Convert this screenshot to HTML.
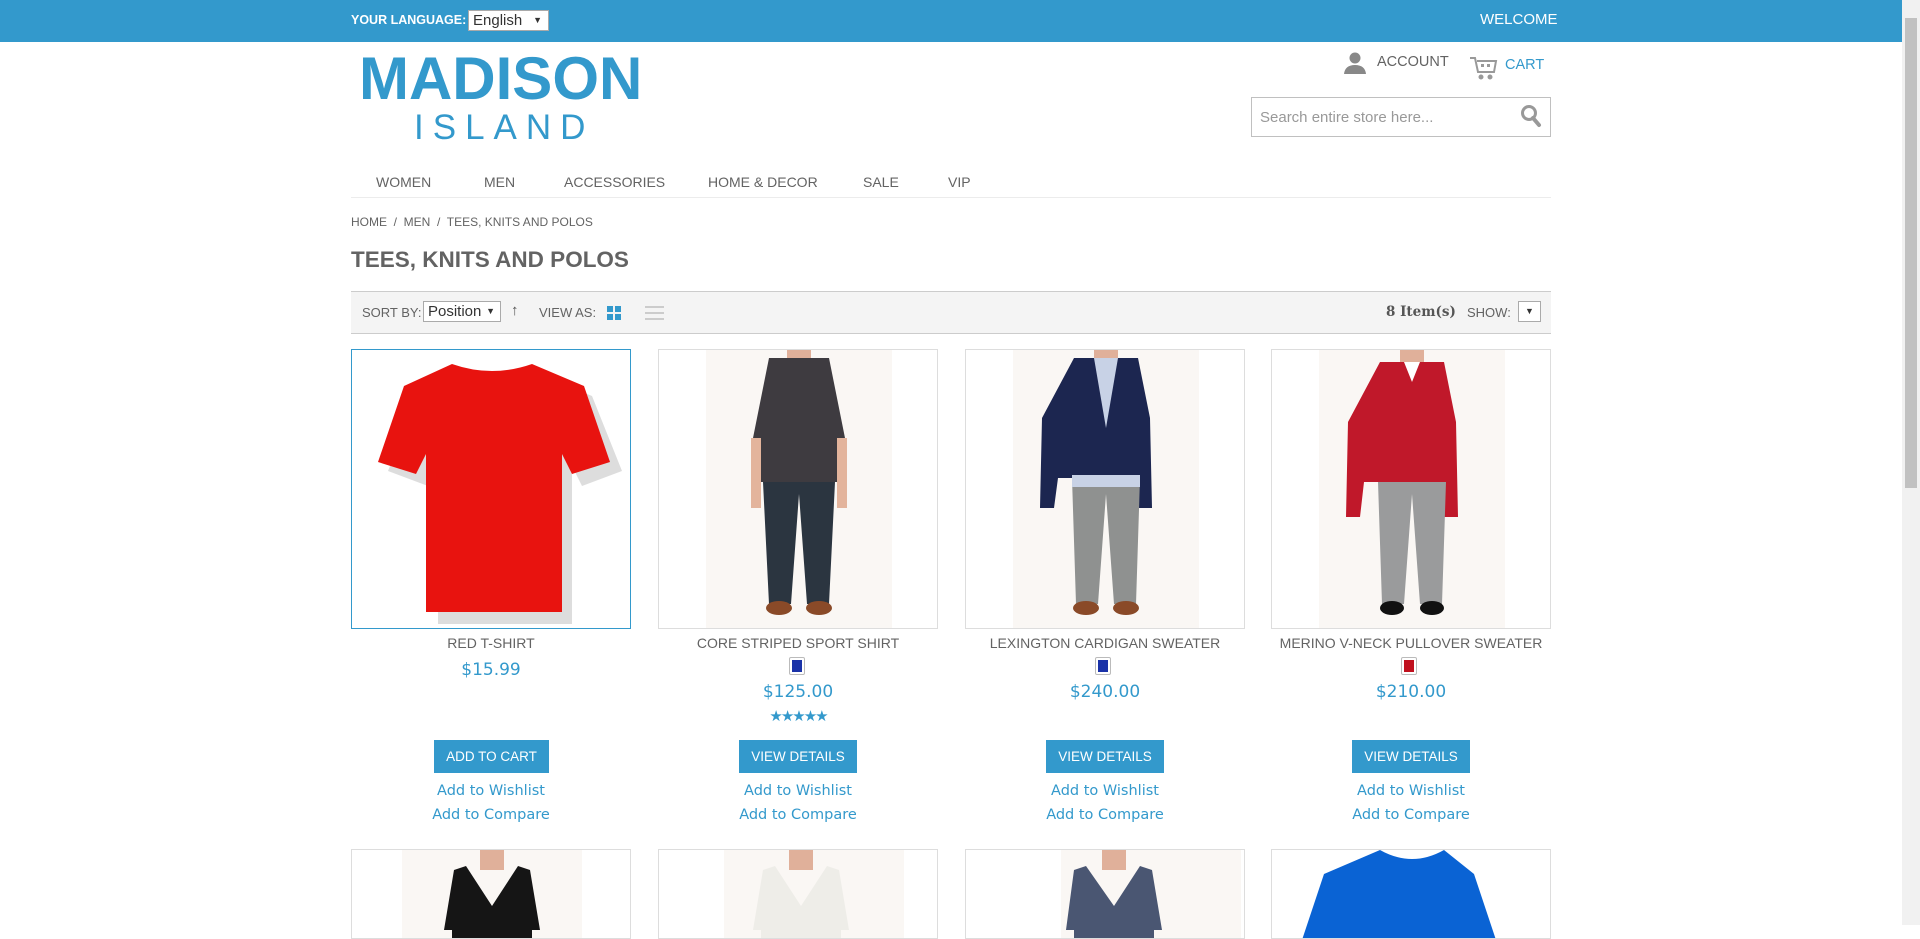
<!DOCTYPE html>
<html><head><meta charset="utf-8"><style>
*{box-sizing:border-box;margin:0;padding:0}
body{width:1920px;height:925px;overflow:hidden;background:#fff;font-family:"Liberation Sans",sans-serif;color:#636363;position:relative}
.a{position:absolute}
.top{left:0;top:0;width:1902px;height:42px;background:#3399cc}
.sb{left:1902px;top:0;width:18px;height:925px;background:#f1f1f1}
.sbt{left:1905px;top:18px;width:12px;height:470px;background:#c1c1c1}
.nav span{position:absolute;top:174px;font-size:14px;color:#636363}
.prod{position:absolute;top:349px;width:280px;height:280px;border:1px solid #ddd;overflow:hidden;background:#fff}
.row2{top:849px;height:90px}
.name{position:absolute;width:280px;text-align:center;font-size:14px;color:#636363;top:635px}
.price{position:absolute;width:280px;text-align:center;font-size:17px;color:#3399cc;font-family:"DejaVu Sans",sans-serif}
.sw{position:absolute;width:16px;height:18px;border:1px solid #bbb;border-radius:2px;top:657px}
.sw i{position:absolute;left:2px;top:2px;width:10px;height:12px;display:block}
.btn{position:absolute;top:740px;height:33px;background:#3399cc;color:#fff;font-size:13.5px;text-align:center;line-height:33px}
.lk{position:absolute;width:280px;text-align:center;color:#3399cc;font-size:14.5px;font-family:"DejaVu Sans",sans-serif}
</style></head><body>
<div class="a top"></div>
<div class="a sb"></div><div class="a sbt"></div>
<div class="a" style="left:351px;top:13px;color:#fff;font-size:12.5px;font-weight:bold">YOUR LANGUAGE:</div>
<div class="a" style="left:468px;top:10px;width:81px;height:21px;background:#fff;border:1px solid #aaa;font-size:15px;color:#333;padding-left:4px;line-height:19px">English<span style="position:absolute;right:6px;font-size:9px">▼</span></div>
<div class="a" style="left:1480px;top:11px;color:#fff;font-size:15px">WELCOME</div>
<div class="a" style="left:359px;top:44px;font-size:60px;font-weight:bold;color:#3399cc;letter-spacing:0px">MADISON</div>
<div class="a" style="left:414px;top:108px;font-size:35px;color:#3399cc;letter-spacing:9px">ISLAND</div>
<svg class="a" style="left:1343px;top:52px" width="24" height="22" viewBox="0 0 24 22"><circle cx="12" cy="6" r="5.5" fill="#888"/><path d="M1 22 Q2 13 12 13 Q22 13 23 22Z" fill="#888"/></svg>
<div class="a" style="left:1377px;top:54px;font-size:14.5px;color:#636363">ACCOUNT</div>
<svg class="a" style="left:1469px;top:56px" width="30" height="24" viewBox="0 0 30 24" fill="none" stroke="#999" stroke-width="2"><path d="M1 2h5l3 14h16l2-11H8"/><rect x="12" y="8" width="3" height="3" fill="#999" stroke="none"/><rect x="18" y="8" width="3" height="3" fill="#999" stroke="none"/><circle cx="12" cy="21" r="1.5" fill="#999"/><circle cx="21" cy="21" r="1.5" fill="#999"/></svg>
<div class="a" style="left:1505px;top:57px;font-size:14.5px;color:#3399cc">CART</div>
<div class="a" style="left:1251px;top:97px;width:300px;height:40px;border:1px solid #c0c0c0;font-size:15px;color:#999;padding:11px 0 0 8px">Search entire store here...</div>
<svg class="a" style="left:1520px;top:104px" width="22" height="24" viewBox="0 0 22 24"><circle cx="9" cy="9" r="6.5" fill="none" stroke="#999" stroke-width="3"/><path d="M13 14l6 7" stroke="#999" stroke-width="4" stroke-linecap="round"/></svg>
<div class="nav"><span style="left:376px">WOMEN</span><span style="left:484px">MEN</span><span style="left:564px">ACCESSORIES</span><span style="left:708px">HOME &amp; DECOR</span><span style="left:863px">SALE</span><span style="left:948px">VIP</span></div>
<div class="a" style="left:351px;top:197px;width:1200px;height:1px;background:#ececec"></div>
<div class="a" style="left:351px;top:215px;font-size:12px;color:#636363">HOME &nbsp;/&nbsp; MEN &nbsp;/&nbsp; TEES, KNITS AND POLOS</div>
<div class="a" style="left:351px;top:247px;font-size:22.5px;font-weight:bold;color:#636363">TEES, KNITS AND POLOS</div>
<div class="a" style="left:351px;top:291px;width:1200px;height:43px;background:#f4f4f4;border-top:1px solid #ccc;border-bottom:1px solid #ccc"></div>
<div class="a" style="left:362px;top:305px;font-size:13px">SORT BY:</div>
<div class="a" style="left:423px;top:301px;width:78px;height:21px;background:#fff;border:1px solid #aaa;font-size:15px;color:#333;padding-left:4px;line-height:19px">Position<span style="position:absolute;right:5px;font-size:9px">▼</span></div>
<div class="a" style="left:511px;top:302px;font-size:15px;color:#555">↑</div>
<div class="a" style="left:539px;top:305px;font-size:13px">VIEW AS:</div>
<svg class="a" style="left:607px;top:306px" width="15" height="15"><rect width="6" height="6" fill="#3399cc"/><rect x="8" width="6" height="6" fill="#3399cc"/><rect y="8" width="6" height="6" fill="#3399cc"/><rect x="8" y="8" width="6" height="6" fill="#3399cc"/></svg>
<svg class="a" style="left:645px;top:306px" width="19" height="15"><rect width="19" height="2" fill="#ccc"/><rect y="6" width="19" height="2" fill="#ccc"/><rect y="12" width="19" height="2" fill="#ccc"/></svg>
<div class="a" style="left:1386px;top:304px;font-size:13.5px;font-weight:bold;color:#555;font-family:'DejaVu Serif',serif">8 Item(s)</div>
<div class="a" style="left:1467px;top:305px;font-size:13px">SHOW:</div>
<div class="a" style="left:1518px;top:301px;width:23px;height:21px;background:#fff;border:1px solid #aaa;font-size:9px;text-align:center;line-height:19px;color:#333">▼</div>

<!-- row 1 -->
<div class="prod" style="left:351px;border-color:#3399cc"><svg width="280" height="280" viewBox="0 0 280 280"><path d="M100 18 Q140 30 180 18 L232 40 L262 115 L222 130 L212 110 L212 268 L78 268 L78 110 L68 130 L28 115 L58 40Z" fill="#ddd" transform="translate(8,6)"/><path d="M100 14 Q140 28 180 14 L232 36 L258 112 L220 124 L210 104 L210 262 L74 262 L74 104 L64 124 L26 112 L52 36Z" fill="#e8130f"/></svg></div>
<div class="prod" style="left:658px"><svg width="280" height="280" viewBox="0 0 280 280"><rect x="47" width="186" height="280" fill="#faf7f4"/><rect x="128" y="0" width="24" height="10" fill="#e0b09a"/><path d="M110 8h60l16 80-8 4v40h-76v-40l-8-4z" fill="#3e3b40"/><rect x="92" y="88" width="10" height="70" fill="#e3b49c"/><rect x="178" y="88" width="10" height="70" fill="#e3b49c"/><path d="M104 132h72l-6 122h-22l-8-110-8 110h-22z" fill="#2b3540"/><ellipse cx="120" cy="258" rx="13" ry="7" fill="#8a4a28"/><ellipse cx="160" cy="258" rx="13" ry="7" fill="#8a4a28"/></svg></div>
<div class="prod" style="left:965px"><svg width="280" height="280" viewBox="0 0 280 280"><rect x="47" width="186" height="280" fill="#faf7f4"/><rect x="128" y="0" width="24" height="10" fill="#e0b09a"/><path d="M108 8h64l12 60 2 90h-14l-4-30h-76l-4 30h-14l2-90z" fill="#1c2650"/><path d="M128 8h24l-12 70z" fill="#c8d2e6"/><path d="M106 128h68l-4 126h-22l-8-110-8 110h-22z" fill="#8f9190"/><rect x="106" y="125" width="68" height="12" fill="#c8d2e6"/><ellipse cx="120" cy="258" rx="13" ry="7" fill="#8a4a28"/><ellipse cx="160" cy="258" rx="13" ry="7" fill="#8a4a28"/></svg></div>
<div class="prod" style="left:1271px"><svg width="280" height="280" viewBox="0 0 280 280"><rect x="47" width="186" height="280" fill="#faf7f4"/><rect x="128" y="0" width="24" height="12" fill="#e0b09a"/><path d="M108 12h64l12 60 2 95h-14l-4-35h-76l-4 35h-14l2-95z" fill="#c0182a"/><path d="M132 12h16l-8 20z" fill="#fff"/><path d="M106 132h68l-4 122h-22l-8-110-8 110h-22z" fill="#9a9b9c"/><ellipse cx="120" cy="258" rx="12" ry="7" fill="#111"/><ellipse cx="160" cy="258" rx="12" ry="7" fill="#111"/></svg></div>

<div class="name" style="left:351px">RED T-SHIRT</div>
<div class="name" style="left:658px">CORE STRIPED SPORT SHIRT</div>
<div class="name" style="left:965px">LEXINGTON CARDIGAN SWEATER</div>
<div class="name" style="left:1271px">MERINO V-NECK PULLOVER SWEATER</div>
<div class="sw" style="left:789px"><i style="background:#1a32a8"></i></div>
<div class="sw" style="left:1095px"><i style="background:#1a32a8"></i></div>
<div class="sw" style="left:1401px"><i style="background:#c0101e"></i></div>
<div class="price" style="left:351px;top:660px">$15.99</div>
<div class="price" style="left:658px;top:682px">$125.00</div>
<div class="price" style="left:965px;top:682px">$240.00</div>
<div class="price" style="left:1271px;top:682px">$210.00</div>
<div class="a" style="left:658px;width:280px;text-align:center;top:707px;color:#3399cc;font-size:15px;letter-spacing:-2px;font-family:'DejaVu Sans',sans-serif">★★★★★</div>
<div class="btn" style="left:434px;width:115px">ADD TO CART</div>
<div class="btn" style="left:739px;width:118px">VIEW DETAILS</div>
<div class="btn" style="left:1046px;width:118px">VIEW DETAILS</div>
<div class="btn" style="left:1352px;width:118px">VIEW DETAILS</div>
<div class="lk" style="left:351px;top:783px">Add to Wishlist</div><div class="lk" style="left:351px;top:807px">Add to Compare</div>
<div class="lk" style="left:658px;top:783px">Add to Wishlist</div><div class="lk" style="left:658px;top:807px">Add to Compare</div>
<div class="lk" style="left:965px;top:783px">Add to Wishlist</div><div class="lk" style="left:965px;top:807px">Add to Compare</div>
<div class="lk" style="left:1271px;top:783px">Add to Wishlist</div><div class="lk" style="left:1271px;top:807px">Add to Compare</div>

<!-- row 2 -->
<div class="prod row2" style="left:351px"><svg width="280" height="90"><rect x="50" width="180" height="90" fill="#faf7f4"/><rect x="128" width="24" height="20" fill="#e0b09a"/><path d="M102 20l12-4 26 40 26-40 12 4 10 60h-8v10h-80v-10h-8z" fill="#151515"/></svg></div>
<div class="prod row2" style="left:658px"><svg width="280" height="90"><rect x="65" width="180" height="90" fill="#faf7f4"/><rect x="130" width="24" height="20" fill="#e0b09a"/><path d="M104 20l12-4 26 40 26-40 12 4 10 60h-8v10h-80v-10h-8z" fill="#eeede8"/></svg></div>
<div class="prod row2" style="left:965px"><svg width="280" height="90"><rect x="95" width="180" height="90" fill="#faf7f4"/><rect x="136" width="24" height="20" fill="#e0b09a"/><path d="M108 20l12-4 28 40 26-40 12 4 10 60h-8v10h-80v-10h-8z" fill="#4a5672"/></svg></div>
<div class="prod row2" style="left:1271px"><svg width="280" height="90"><path d="M108 0q32 18 64 0l30 24 22 66H30l22-66z" fill="#0a63d4"/></svg></div>
</body></html>
